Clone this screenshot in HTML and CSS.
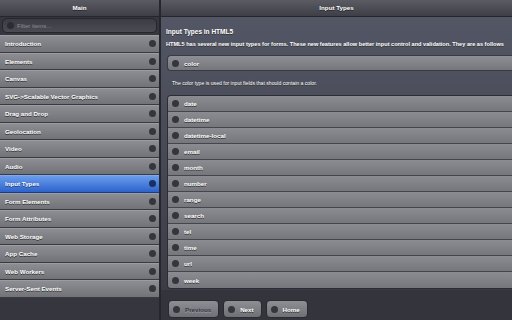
FILE: index.html
```html
<!DOCTYPE html>
<html lang="en">
<head>
    <meta charset="UTF-8">
    <title>HTML5 Tutorial</title>
    <link rel="stylesheet" href="styles.css">
</head>
<body>
    <div class="sidebar">
        <div class="bar">Main</div>
        <div class="search"><span class="dot"></span>Filter items...</div>
        <ul class="menu">
            <li>Introduction<span class="dot"></span></li>
            <li>Elements<span class="dot"></span></li>
            <li>Canvas<span class="dot"></span></li>
            <li>SVG-&gt;Scalable Vector Graphics<span class="dot"></span></li>
            <li>Drag and Drop<span class="dot"></span></li>
            <li>Geolocation<span class="dot"></span></li>
            <li>Video<span class="dot"></span></li>
            <li>Audio<span class="dot"></span></li>
            <li class="active">Input Types<span class="dot"></span></li>
            <li>Form Elements<span class="dot"></span></li>
            <li>Form Attributes<span class="dot"></span></li>
            <li>Web Storage<span class="dot"></span></li>
            <li>App Cache<span class="dot"></span></li>
            <li>Web Workers<span class="dot"></span></li>
            <li>Server-Sent Events<span class="dot"></span></li>
        </ul>
    </div>

    <div class="main">
        <div class="bar">Input Types</div>
        <div class="content">
            <h2>Input Types in HTML5</h2>
            <p class="intro">HTML5 has several new input types for forms. These new features allow better input control and validation. They are as follows</p>
            <div class="open-item"><span class="dot"></span>color</div>
            <p class="desc">The color type is used for input fields that should contain a color.</p>
            <ul class="types">
                <li><span class="dot"></span>date</li>
                <li><span class="dot"></span>datetime</li>
                <li><span class="dot"></span>datetime-local</li>
                <li><span class="dot"></span>email</li>
                <li><span class="dot"></span>month</li>
                <li><span class="dot"></span>number</li>
                <li><span class="dot"></span>range</li>
                <li><span class="dot"></span>search</li>
                <li><span class="dot"></span>tel</li>
                <li><span class="dot"></span>time</li>
                <li><span class="dot"></span>url</li>
                <li><span class="dot"></span>week</li>
            </ul>
        </div>
        <div class="footer">
            <button class="btn disabled"><span class="dot"></span>Previous</button>
            <button class="btn"><span class="dot"></span>Next</button>
            <button class="btn"><span class="dot"></span>Home</button>
        </div>
    </div>
</body>
</html>
```

FILE: styles.css
```css
body {
    margin: 0;
    width: 512px;
    height: 320px;
    overflow: hidden;
    display: flex;
    font-family: 'Liberation Sans', Arial, sans-serif;
    color: white;
    background-color: #33343c;
}
.dot {
    display: inline-block;
    width: 7px;
    height: 7px;
    border-radius: 50%;
    background-color: #35363c;
    flex-shrink: 0;
}
.bar {
    height: 16px;
    line-height: 16px;
    text-align: center;
    font-size: 6.2px;
    font-weight: bold;
    text-shadow: 0 1px 0 #222;
    background: linear-gradient(#5a5b63, #3d3e46);
    border-bottom: 1px solid #26272c;
}
.sidebar {
    width: 159px;
    background-color: #35363e;
    border-right: 2px solid #26272d;
    flex-shrink: 0;
}
.search {
    margin: 1px 2px 0;
    height: 13px;
    border: 1px solid #26272c;
    border-radius: 5px;
    background: linear-gradient(#3b3c44, #4a4b53);
    display: flex;
    align-items: center;
    gap: 3px;
    padding-left: 4px;
    font-size: 6px;
    color: #8d8e94;
}
.search .dot {
    background-color: #2c2d33;
}
.menu {
    list-style: none;
    margin: 2px 0 0;
    padding: 0;
}
.menu li {
    box-sizing: border-box;
    height: 17.5px;
    display: flex;
    align-items: center;
    justify-content: space-between;
    padding: 0 3px 0 5px;
    font-size: 6.2px;
    font-weight: bold;
    text-shadow: 0 1px 0 #333;
    background: linear-gradient(#8c8d92, #727378);
    border-top: 1px solid #9b9ca1;
    border-bottom: 1px solid #3a3b40;
}
.menu li.active {
    background: linear-gradient(#6a9cec, #2d63cb);
    border-top-color: #7eaaf0;
    border-bottom-color: #1c3e80;
    text-shadow: 0 1px 0 #1b3c7a;
}
.menu li.active .dot {
    background-color: #1a3160;
}
.main {
    flex: 1;
    display: flex;
    flex-direction: column;
    min-width: 0;
}
.content {
    flex: 1;
    padding: 8px 0 0 5px;
    background: linear-gradient(#535665, #3b3c46);
}
.content h2 {
    margin: 0;
    font-size: 6.5px;
    line-height: 13px;
    text-shadow: 0 1px 0 #333;
}
.intro {
    margin: 0 0 4px;
    font-size: 5.6px;
    font-weight: bold;
    line-height: 13px;
    white-space: nowrap;
    text-shadow: 0 1px 0 #333;
}
.open-item {
    box-sizing: border-box;
    height: 16px;
    margin-left: 1px;
    display: flex;
    align-items: center;
    gap: 5px;
    padding-left: 4px;
    font-size: 6.2px;
    font-weight: bold;
    text-shadow: 0 1px 0 #333;
    background: linear-gradient(#8e8f94, #76777c);
    border: 1px solid #3a3b40;
    border-right: none;
    border-radius: 4px 0 0 4px;
}
.desc {
    margin: 0;
    padding: 0 0 0 6px;
    height: 24px;
    line-height: 24px;
    font-size: 5.1px;
    text-shadow: 0 1px 0 #333;
}
.types {
    list-style: none;
    margin: 0 0 0 1px;
    padding: 0;
    border: 1px solid #2c2d32;
    border-right: none;
    border-radius: 4px 0 0 4px;
    overflow: hidden;
}
.types li {
    box-sizing: border-box;
    height: 16px;
    display: flex;
    align-items: center;
    gap: 5px;
    padding-left: 4px;
    font-size: 6.2px;
    font-weight: bold;
    text-shadow: 0 1px 0 #333;
    background: linear-gradient(#8b8c91, #76777c);
    border-bottom: 1px solid #45464c;
}
.types li:last-child {
    border-bottom: none;
}
.footer {
    height: 30px;
    display: flex;
    align-items: flex-start;
    gap: 4px;
    padding: 10px 0 0 7px;
    box-sizing: border-box;
    background-color: #33343c;
}
.btn {
    height: 18px;
    display: flex;
    align-items: center;
    gap: 5px;
    padding: 0 7px 0 4px;
    font-family: 'Liberation Sans', Arial, sans-serif;
    font-size: 6.2px;
    font-weight: bold;
    color: white;
    text-shadow: 0 1px 0 #333;
    background: linear-gradient(#8e8f94, #6f7075);
    border: 1px solid #2a2b30;
    border-radius: 4px;
}
.btn.disabled {
    color: #34394a;
    text-shadow: 0 1px 0 #999;
}
```
